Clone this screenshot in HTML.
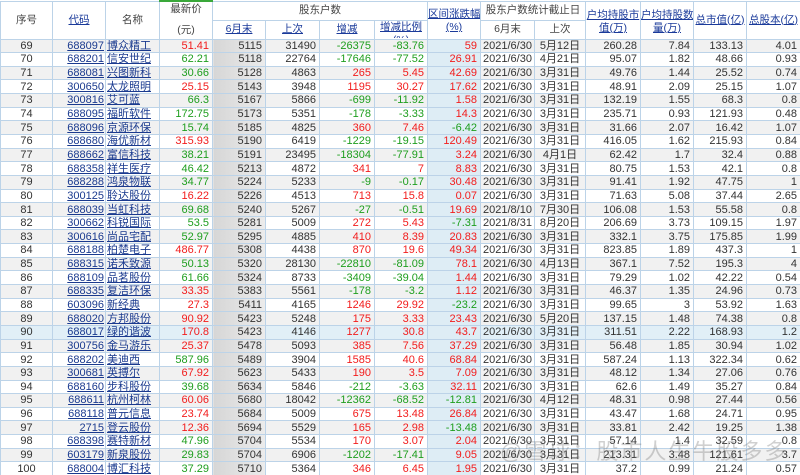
<!DOCTYPE html>
<html><head><meta charset="utf-8">
<style>
html,body{margin:0;padding:0;width:800px;height:475px;overflow:hidden;background:#fff;}
body{font-family:"Liberation Sans","Noto Sans CJK SC",sans-serif;font-size:11px;color:#333;position:relative}
table{border-collapse:collapse;table-layout:fixed;width:800px;position:absolute;left:0;top:0}
td,th{border:1px solid #bcd3e8;padding:0 3px 0 0;white-space:nowrap;overflow:hidden;text-align:right;line-height:12px}
th{font-weight:normal;color:#444;text-align:center;padding:0;background:#fff;font-size:10.5px;line-height:13px}
th .b{height:17px;overflow:hidden;padding-top:2px;box-sizing:border-box}
th .t{height:36px;overflow:hidden;padding-top:1px;box-sizing:border-box}
thead tr{height:19px}
tbody tr{height:13.65px}
tbody tr:nth-child(odd){background:#f1f1f1}
tbody tr.hl{background:#e1eff7}
td.i{text-align:center;padding:0}
td.c{padding-right:1px}
td.n{text-align:left;padding:0 0 0 1px}
u{color:#1a3a8f}
th u{color:#1a3a9a}
.r{color:#f21c1c}
.g{color:#1e9e1e}
td.h{background:linear-gradient(to right,#d6d6d6,#ececec)}
td.q{background:#deedf5}
td.d{text-align:center;padding:0}
th.p{border-top:2px solid #3aa83a}
.wm{position:absolute;left:500px;top:434px;font-size:22px;color:rgba(120,120,120,.35);letter-spacing:2px;white-space:nowrap}
</style></head><body>
<table>
<colgroup><col style="width:52px"><col style="width:53px"><col style="width:54px"><col style="width:53px"><col style="width:53px"><col style="width:54px"><col style="width:55px"><col style="width:53px"><col style="width:53px"><col style="width:54px"><col style="width:51px"><col style="width:55px"><col style="width:53px"><col style="width:53px"><col style="width:54px"></colgroup>
<thead>
<tr><th rowspan="2">序号</th><th rowspan="2"><u>代码</u></th><th rowspan="2">名称</th><th rowspan="2" class="p"><div class="t">最新价<div style="height:8px"></div>(元)</div></th><th colspan="4"><div class="b">股东户数</div></th><th rowspan="2"><div class="t" style="padding-top:6px"><u>区间涨跌幅</u><br><u>(%)</u></div></th><th colspan="2"><div class="b">股东户数统计截止日</div></th><th rowspan="2"><div class="t" style="padding-top:7px"><u>户均持股市</u><br><u>值(万)</u></div></th><th rowspan="2"><div class="t" style="padding-top:7px"><u>户均持股数</u><br><u>量(万)</u></div></th><th rowspan="2"><u>总市值(亿)</u></th><th rowspan="2"><u>总股本(亿)</u></th></tr>
<tr><th><div class="b"><u>6月末</u></div></th><th><div class="b"><u>上次</u></div></th><th><div class="b"><u>增减</u></div></th><th><div class="b" style="padding-top:0"><u>增减比例</u><br><u>(%)</u></div></th><th><div class="b">6月末</div></th><th><div class="b">上次</div></th></tr>
</thead>
<tbody>
<tr><td class="i">69</td><td class="c"><u>688097</u></td><td class="n"><u>博众精工</u></td><td class="r">51.41</td><td class="h">5115</td><td>31490</td><td class="g">-26375</td><td class="g">-83.76</td><td class="q r">59</td><td class="d">2021/6/30</td><td class="d">5月12日</td><td>260.28</td><td>7.84</td><td>133.13</td><td>4.01</td></tr>
<tr><td class="i">70</td><td class="c"><u>688201</u></td><td class="n"><u>信安世纪</u></td><td class="g">62.21</td><td class="h">5118</td><td>22764</td><td class="g">-17646</td><td class="g">-77.52</td><td class="q r">26.91</td><td class="d">2021/6/30</td><td class="d">4月21日</td><td>95.07</td><td>1.82</td><td>48.66</td><td>0.93</td></tr>
<tr><td class="i">71</td><td class="c"><u>688081</u></td><td class="n"><u>兴图新科</u></td><td class="g">30.66</td><td class="h">5128</td><td>4863</td><td class="r">265</td><td class="r">5.45</td><td class="q r">42.69</td><td class="d">2021/6/30</td><td class="d">3月31日</td><td>49.76</td><td>1.44</td><td>25.52</td><td>0.74</td></tr>
<tr><td class="i">72</td><td class="c"><u>300650</u></td><td class="n"><u>太龙照明</u></td><td class="r">25.15</td><td class="h">5143</td><td>3948</td><td class="r">1195</td><td class="r">30.27</td><td class="q r">17.62</td><td class="d">2021/6/30</td><td class="d">3月31日</td><td>48.91</td><td>2.09</td><td>25.15</td><td>1.07</td></tr>
<tr><td class="i">73</td><td class="c"><u>300816</u></td><td class="n"><u>艾可蓝</u></td><td class="g">66.3</td><td class="h">5167</td><td>5866</td><td class="g">-699</td><td class="g">-11.92</td><td class="q r">1.58</td><td class="d">2021/6/30</td><td class="d">3月31日</td><td>132.19</td><td>1.55</td><td>68.3</td><td>0.8</td></tr>
<tr><td class="i">74</td><td class="c"><u>688095</u></td><td class="n"><u>福昕软件</u></td><td class="g">172.75</td><td class="h">5173</td><td>5351</td><td class="g">-178</td><td class="g">-3.33</td><td class="q r">14.3</td><td class="d">2021/6/30</td><td class="d">3月31日</td><td>235.71</td><td>0.93</td><td>121.93</td><td>0.48</td></tr>
<tr><td class="i">75</td><td class="c"><u>688096</u></td><td class="n"><u>京源环保</u></td><td class="g">15.74</td><td class="h">5185</td><td>4825</td><td class="r">360</td><td class="r">7.46</td><td class="q g">-6.42</td><td class="d">2021/6/30</td><td class="d">3月31日</td><td>31.66</td><td>2.07</td><td>16.42</td><td>1.07</td></tr>
<tr><td class="i">76</td><td class="c"><u>688680</u></td><td class="n"><u>海优新材</u></td><td class="r">315.93</td><td class="h">5190</td><td>6419</td><td class="g">-1229</td><td class="g">-19.15</td><td class="q r">120.49</td><td class="d">2021/6/30</td><td class="d">3月31日</td><td>416.05</td><td>1.62</td><td>215.93</td><td>0.84</td></tr>
<tr><td class="i">77</td><td class="c"><u>688662</u></td><td class="n"><u>富信科技</u></td><td class="g">38.21</td><td class="h">5191</td><td>23495</td><td class="g">-18304</td><td class="g">-77.91</td><td class="q r">3.24</td><td class="d">2021/6/30</td><td class="d">4月1日</td><td>62.42</td><td>1.7</td><td>32.4</td><td>0.88</td></tr>
<tr><td class="i">78</td><td class="c"><u>688358</u></td><td class="n"><u>祥生医疗</u></td><td class="g">46.42</td><td class="h">5213</td><td>4872</td><td class="r">341</td><td class="r">7</td><td class="q r">8.83</td><td class="d">2021/6/30</td><td class="d">3月31日</td><td>80.75</td><td>1.53</td><td>42.1</td><td>0.8</td></tr>
<tr><td class="i">79</td><td class="c"><u>688288</u></td><td class="n"><u>鸿泉物联</u></td><td class="g">34.77</td><td class="h">5224</td><td>5233</td><td class="g">-9</td><td class="g">-0.17</td><td class="q r">30.48</td><td class="d">2021/6/30</td><td class="d">3月31日</td><td>91.41</td><td>1.92</td><td>47.75</td><td>1</td></tr>
<tr><td class="i">80</td><td class="c"><u>300125</u></td><td class="n"><u>聆达股份</u></td><td class="r">16.22</td><td class="h">5226</td><td>4513</td><td class="r">713</td><td class="r">15.8</td><td class="q r">0.07</td><td class="d">2021/6/30</td><td class="d">3月31日</td><td>71.63</td><td>5.08</td><td>37.44</td><td>2.65</td></tr>
<tr><td class="i">81</td><td class="c"><u>688039</u></td><td class="n"><u>当虹科技</u></td><td class="g">69.68</td><td class="h">5240</td><td>5267</td><td class="g">-27</td><td class="g">-0.51</td><td class="q r">19.69</td><td class="d">2021/8/10</td><td class="d">7月30日</td><td>106.08</td><td>1.53</td><td>55.58</td><td>0.8</td></tr>
<tr><td class="i">82</td><td class="c"><u>300662</u></td><td class="n"><u>科锐国际</u></td><td class="g">53.5</td><td class="h">5281</td><td>5009</td><td class="r">272</td><td class="r">5.43</td><td class="q g">-7.31</td><td class="d">2021/8/31</td><td class="d">8月20日</td><td>206.69</td><td>3.73</td><td>109.15</td><td>1.97</td></tr>
<tr><td class="i">83</td><td class="c"><u>300616</u></td><td class="n"><u>尚品宅配</u></td><td class="g">52.97</td><td class="h">5295</td><td>4885</td><td class="r">410</td><td class="r">8.39</td><td class="q r">20.83</td><td class="d">2021/6/30</td><td class="d">3月31日</td><td>332.1</td><td>3.75</td><td>175.85</td><td>1.99</td></tr>
<tr><td class="i">84</td><td class="c"><u>688188</u></td><td class="n"><u>柏楚电子</u></td><td class="r">486.77</td><td class="h">5308</td><td>4438</td><td class="r">870</td><td class="r">19.6</td><td class="q r">49.34</td><td class="d">2021/6/30</td><td class="d">3月31日</td><td>823.85</td><td>1.89</td><td>437.3</td><td>1</td></tr>
<tr><td class="i">85</td><td class="c"><u>688315</u></td><td class="n"><u>诺禾致源</u></td><td class="g">50.13</td><td class="h">5320</td><td>28130</td><td class="g">-22810</td><td class="g">-81.09</td><td class="q r">78.1</td><td class="d">2021/6/30</td><td class="d">4月13日</td><td>367.1</td><td>7.52</td><td>195.3</td><td>4</td></tr>
<tr><td class="i">86</td><td class="c"><u>688109</u></td><td class="n"><u>品茗股份</u></td><td class="g">61.66</td><td class="h">5324</td><td>8733</td><td class="g">-3409</td><td class="g">-39.04</td><td class="q r">1.44</td><td class="d">2021/6/30</td><td class="d">3月31日</td><td>79.29</td><td>1.02</td><td>42.22</td><td>0.54</td></tr>
<tr><td class="i">87</td><td class="c"><u>688335</u></td><td class="n"><u>复洁环保</u></td><td class="r">33.35</td><td class="h">5383</td><td>5561</td><td class="g">-178</td><td class="g">-3.2</td><td class="q r">1.12</td><td class="d">2021/6/30</td><td class="d">3月31日</td><td>46.37</td><td>1.35</td><td>24.96</td><td>0.73</td></tr>
<tr><td class="i">88</td><td class="c"><u>603096</u></td><td class="n"><u>新经典</u></td><td class="r">27.3</td><td class="h">5411</td><td>4165</td><td class="r">1246</td><td class="r">29.92</td><td class="q g">-23.2</td><td class="d">2021/6/30</td><td class="d">3月31日</td><td>99.65</td><td>3</td><td>53.92</td><td>1.63</td></tr>
<tr><td class="i">89</td><td class="c"><u>688020</u></td><td class="n"><u>方邦股份</u></td><td class="r">90.92</td><td class="h">5423</td><td>5248</td><td class="r">175</td><td class="r">3.33</td><td class="q r">23.43</td><td class="d">2021/6/30</td><td class="d">5月20日</td><td>137.15</td><td>1.48</td><td>74.38</td><td>0.8</td></tr>
<tr class="hl"><td class="i">90</td><td class="c"><u>688017</u></td><td class="n"><u>绿的谐波</u></td><td class="r">170.8</td><td class="h">5423</td><td>4146</td><td class="r">1277</td><td class="r">30.8</td><td class="q r">43.7</td><td class="d">2021/6/30</td><td class="d">3月31日</td><td>311.51</td><td>2.22</td><td>168.93</td><td>1.2</td></tr>
<tr><td class="i">91</td><td class="c"><u>300756</u></td><td class="n"><u>金马游乐</u></td><td class="r">25.37</td><td class="h">5478</td><td>5093</td><td class="r">385</td><td class="r">7.56</td><td class="q r">37.29</td><td class="d">2021/6/30</td><td class="d">3月31日</td><td>56.48</td><td>1.85</td><td>30.94</td><td>1.02</td></tr>
<tr><td class="i">92</td><td class="c"><u>688202</u></td><td class="n"><u>美迪西</u></td><td class="g">587.96</td><td class="h">5489</td><td>3904</td><td class="r">1585</td><td class="r">40.6</td><td class="q r">68.84</td><td class="d">2021/6/30</td><td class="d">3月31日</td><td>587.24</td><td>1.13</td><td>322.34</td><td>0.62</td></tr>
<tr><td class="i">93</td><td class="c"><u>300681</u></td><td class="n"><u>英搏尔</u></td><td class="r">67.92</td><td class="h">5623</td><td>5433</td><td class="r">190</td><td class="r">3.5</td><td class="q r">7.09</td><td class="d">2021/6/30</td><td class="d">3月31日</td><td>48.12</td><td>1.34</td><td>27.06</td><td>0.76</td></tr>
<tr><td class="i">94</td><td class="c"><u>688160</u></td><td class="n"><u>步科股份</u></td><td class="g">39.68</td><td class="h">5634</td><td>5846</td><td class="g">-212</td><td class="g">-3.63</td><td class="q r">32.11</td><td class="d">2021/6/30</td><td class="d">3月31日</td><td>62.6</td><td>1.49</td><td>35.27</td><td>0.84</td></tr>
<tr><td class="i">95</td><td class="c"><u>688611</u></td><td class="n"><u>杭州柯林</u></td><td class="r">60.06</td><td class="h">5680</td><td>18042</td><td class="g">-12362</td><td class="g">-68.52</td><td class="q g">-12.81</td><td class="d">2021/6/30</td><td class="d">4月12日</td><td>48.31</td><td>0.98</td><td>27.44</td><td>0.56</td></tr>
<tr><td class="i">96</td><td class="c"><u>688118</u></td><td class="n"><u>普元信息</u></td><td class="r">23.74</td><td class="h">5684</td><td>5009</td><td class="r">675</td><td class="r">13.48</td><td class="q r">26.84</td><td class="d">2021/6/30</td><td class="d">3月31日</td><td>43.47</td><td>1.68</td><td>24.71</td><td>0.95</td></tr>
<tr><td class="i">97</td><td class="c"><u>2715</u></td><td class="n"><u>登云股份</u></td><td class="r">12.36</td><td class="h">5694</td><td>5529</td><td class="r">165</td><td class="r">2.98</td><td class="q g">-13.48</td><td class="d">2021/6/30</td><td class="d">3月31日</td><td>33.81</td><td>2.42</td><td>19.25</td><td>1.38</td></tr>
<tr><td class="i">98</td><td class="c"><u>688398</u></td><td class="n"><u>赛特新材</u></td><td class="g">47.96</td><td class="h">5704</td><td>5534</td><td class="r">170</td><td class="r">3.07</td><td class="q r">2.04</td><td class="d">2021/6/30</td><td class="d">3月31日</td><td>57.14</td><td>1.4</td><td>32.59</td><td>0.8</td></tr>
<tr><td class="i">99</td><td class="c"><u>603179</u></td><td class="n"><u>新泉股份</u></td><td class="g">29.83</td><td class="h">5704</td><td>6906</td><td class="g">-1202</td><td class="g">-17.41</td><td class="q r">9.05</td><td class="d">2021/6/30</td><td class="d">3月31日</td><td>213.31</td><td>3.48</td><td>121.61</td><td>3.7</td></tr>
<tr><td class="i">100</td><td class="c"><u>688004</u></td><td class="n"><u>博汇科技</u></td><td class="g">37.29</td><td class="h">5710</td><td>5364</td><td class="r">346</td><td class="r">6.45</td><td class="q r">1.95</td><td class="d">2021/6/30</td><td class="d">3月31日</td><td>37.2</td><td>0.99</td><td>21.24</td><td>0.57</td></tr>
</tbody></table>
<div class="wm">@雪球：股市人生牛股多多</div>
</body></html>
